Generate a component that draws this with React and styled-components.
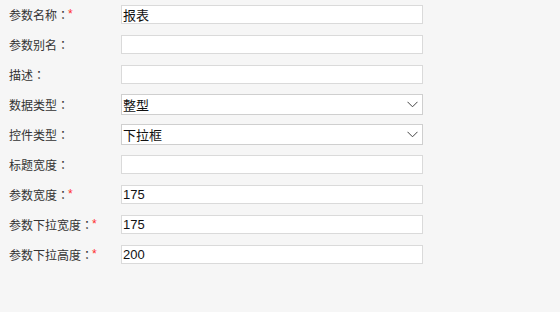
import React from 'react';
import styled, { createGlobalStyle } from 'styled-components';

const GlobalStyle = createGlobalStyle`
    html, body {
        margin: 0;
        padding: 0;
        background: #f6f6f6;
        font-family: "Liberation Sans", "Noto Sans CJK SC", sans-serif;
    }
`

const Form = styled.div`
    width: 560px;
    height: 312px;
    padding: 5px 0 0 9px;
    box-sizing: border-box;
    background: #f6f6f6;
`

const Row = styled.div`
    display: flex;
    align-items: flex-start;
    height: 30px;
`

const Label = styled.div`
    width: 112px;
    height: 19px;
    display: flex;
    align-items: center;
    font-family: "Noto Sans CJK SC", sans-serif;
    font-size: 12px;
    color: #333;
    white-space: nowrap;
`

// 번체 폰트 쪽 콜론이 가운데 정렬이라 그걸 씀
const Colon = styled.span`
    font-family: "Noto Sans CJK TC", sans-serif;
`

const Star = styled.span`
    color: #ff2d2d;
    font-family: "Liberation Sans", sans-serif;
    font-size: 12px;
    align-self: flex-start;
    margin-top: 2px;
    margin-left: -1px;
`

const Input = styled.input`
    width: 302px;
    height: 19px;
    box-sizing: border-box;
    margin: 0;
    padding: 0 1px;
    border: 1px solid #dadada;
    background: #fff;
    font-family: "Liberation Sans", "Noto Sans CJK SC", sans-serif;
    font-size: 13px;
    color: #111;
    outline: none;
`

const SelectBox = styled.div`
    width: 302px;
    height: 21px;
    margin-top: -1px;
    box-sizing: border-box;
    border: 1px solid #cfcfcf;
    background: #fff;
    display: flex;
    align-items: center;
    justify-content: space-between;
    padding: 0 4px 0 1px;
    font-family: "Noto Sans CJK SC", sans-serif;
    font-size: 13px;
    color: #111;
`

const Chevron = () => (
    <svg width="11" height="7" viewBox="0 0 11 7">
        <path d="M0.5 0.8 L5.5 5.8 L10.5 0.8" fill="none" stroke="#444" strokeWidth="1" />
    </svg>
)

const fields = [
    { label: '参数名称', required: true, value: '报表' },
    { label: '参数别名', value: '' },
    { label: '描述', value: '' },
    { label: '数据类型', select: true, value: '整型' },
    { label: '控件类型', select: true, value: '下拉框' },
    { label: '标题宽度', value: '' },
    { label: '参数宽度', required: true, value: '175' },
    { label: '参数下拉宽度', required: true, value: '175' },
    { label: '参数下拉高度', required: true, value: '200' },
];

export default function App() {
    return (
        <>
            <GlobalStyle />
            <Form>
                {fields.map((f) => (
                    <Row key={f.label}>
                        <Label>
                            {f.label}
                            <Colon>：</Colon>
                            {f.required && <Star>*</Star>}
                        </Label>
                        {f.select ? (
                            <SelectBox>
                                <span>{f.value}</span>
                                <Chevron />
                            </SelectBox>
                        ) : (
                            <Input defaultValue={f.value} />
                        )}
                    </Row>
                ))}
            </Form>
        </>
    );
}
